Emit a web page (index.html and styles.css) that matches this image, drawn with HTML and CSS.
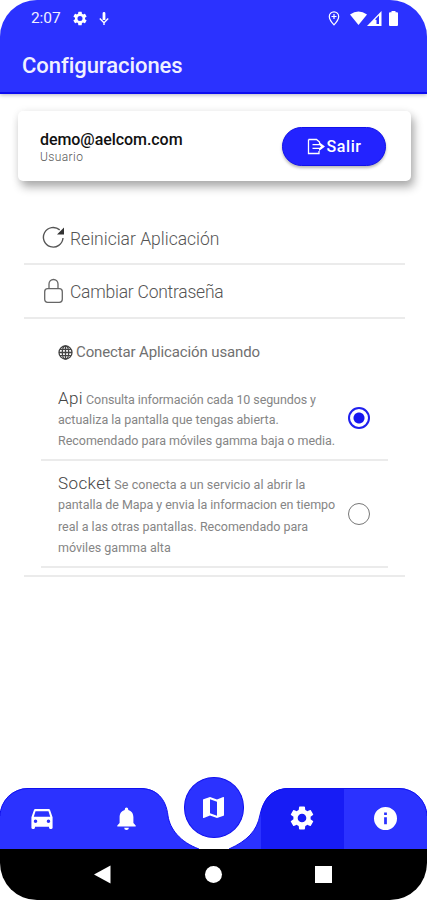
FILE: index.html
```html
<!DOCTYPE html>
<html lang="es">
<head>
<meta charset="utf-8">
<title>Configuraciones</title>
<link rel="stylesheet" href="styles.css">
</head>
<body>
<div class="phone">
  <header class="header">
    <div class="status">
      <span class="time">2:07</span>
      <svg class="s-gear" viewBox="2 2 20 20"><path d="M19.14 12.94c.04-.3.06-.61.06-.94s-.02-.64-.07-.94l2.03-1.58a.49.49 0 0 0 .12-.61l-1.92-3.32a.49.49 0 0 0-.59-.22l-2.39.96a7 7 0 0 0-1.62-.94l-.36-2.54a.48.48 0 0 0-.48-.41h-3.84a.48.48 0 0 0-.47.41l-.36 2.54c-.59.24-1.13.57-1.62.94l-2.39-.96a.48.48 0 0 0-.59.22L2.74 8.87a.48.48 0 0 0 .12.61l2.03 1.58a6 6 0 0 0-.02 1.88l-2.03 1.58a.49.49 0 0 0-.12.61l1.92 3.32c.12.22.37.29.59.22l2.39-.96c.5.38 1.03.7 1.62.94l.36 2.54c.05.24.24.41.48.41h3.84c.24 0 .44-.17.47-.41l.36-2.54a7 7 0 0 0 1.62-.94l2.39.96c.22.08.47 0 .59-.22l1.92-3.32a.48.48 0 0 0-.12-.61zM12 15.6a3.6 3.6 0 1 1 0-7.2 3.6 3.6 0 0 1 0 7.2z"/></svg>
      <svg class="s-mic" viewBox="0 0 10 13"><path d="M3.600 1.400a1.400 1.400 0 0 1 2.800 0V8H3.600z"/><path d="M.8 6.500L5 10.800l4.200-4.300M5 10v3" fill="none" stroke="#fff" stroke-width="1.400"/></svg>
      <span class="grow"></span>
      <svg class="s-pin" viewBox="0 0 12 15"><path d="M6 .8a4.700 4.700 0 0 0-4.700 4.700C1.300 9 6 13.800 6 13.800S10.700 9 10.700 5.500A4.700 4.700 0 0 0 6 .8z" fill="none" stroke="#fff" stroke-width="1.200"/><path d="M6 3v5M3.500 5.500h5" stroke="#fff" stroke-width="1.200"/></svg>
      <svg class="s-wifi" viewBox="0 0 18 15"><path d="M0 3.300Q9-3 18 3.300L9 14.500z"/></svg>
      <svg class="s-signal" viewBox="0 0 15 15"><path d="M14.500 0v15H0z"/><path class="cut" d="M8 8.500l4-4v8.500h-2.500v-4z"/></svg>
      <svg class="s-battery" viewBox="0 0 9 15"><path d="M2.500 0h4v1.200H8a1 1 0 0 1 1 1V14a1 1 0 0 1-1 1H1a1 1 0 0 1-1-1V2.200a1 1 0 0 1 1-1h1.500z"/></svg>
    </div>
    <h1 class="title">Configuraciones</h1>
  </header>

  <main class="content">
    <section class="card">
      <div class="user">
        <div class="email">demo@aelcom.com</div>
        <div class="role">Usuario</div>
      </div>
      <button class="logout">
        <svg viewBox="0 0 19 17"><path d="M1.500 1.500h8l3 2.500v1.500M1.500 1.500v14h10.500v-2.500M5.500 6.700h7M5.500 10.300h7"/><path class="solid" d="M12 4l6 4.500-6 4.500v-2.700l2-1.800-2-1.800z"/></svg>
        <span>Salir</span>
      </button>
    </section>

    <section class="options">
      <div class="row first">
        <svg class="reload" viewBox="0 0 23 23"><path d="M21 12A9.800 9.800 0 1 1 17.700 3.900" fill="none" stroke="#555" stroke-width="1.400"/><path d="M22 1.500v7h-7z" fill="#333"/></svg>
        <span class="t-reset">Reiniciar Aplicación</span>
      </div>
      <div class="row">
        <svg class="lock" viewBox="0 0 23 26"><rect x="2.700" y="10.700" width="17.600" height="13.600" rx="3"/><path d="M7 10.500V6a4.500 4.500 0 0 1 9 0v4.500"/></svg>
        <span class="t-pass">Cambiar Contraseña</span>
      </div>
      <div class="connection">
        <div class="conn-head">
          <svg viewBox="0 0 15 15"><circle cx="7.500" cy="7.500" r="6.500"/><ellipse cx="7.500" cy="7.500" rx="3.200" ry="6.500"/><path d="M7.500 1v13M1 7.500h13M2 4.300h11M2 10.700h11"/></svg>
          <span>Conectar Aplicación usando</span>
        </div>
        <label class="choice api">
          <span class="desc">
            <span class="line a1"><b>Api</b> Consulta información cada 10 segundos y</span>
            <span class="line a2">actualiza la pantalla que tengas abierta.</span>
            <span class="line a3">Recomendado para móviles gamma baja o media.</span>
          </span>
          <span class="radio on"></span>
        </label>
        <label class="choice socket">
          <span class="desc">
            <span class="line b1"><b>Socket</b> Se conecta a un servicio al abrir la</span>
            <span class="line b2">pantalla de Mapa y envia la informacion en tiempo</span>
            <span class="line b3">real a las otras pantallas. Recomendado para</span>
            <span class="line b4">móviles gamma alta</span>
          </span>
          <span class="radio"></span>
        </label>
      </div>
    </section>
  </main>

  <nav class="tabs">
    <svg class="tabs-bg" viewBox="0 0 427 73">
      <defs><clipPath id="right-tab"><path d="M229 73C247 65 257 55 260 39C264 21 273 12 290 12H399A28 28 0 0 1 427 40V73z"/></clipPath></defs>
      <path d="M0 73V40A28 28 0 0 1 28 12H140C156 12 166 22 168 40C170 53 180 66 199 73z"/>
      <g clip-path="url(#right-tab)"><rect x="220" width="207" height="73"/><rect class="active" x="261" width="83" height="73"/></g>
      <path class="edge" d="M0 40A28 28 0 0 1 28 12.500H140C156 12.500 166 22 168 40C170 53 180 66 199 73M229 73C247 65 257 55 260 39C264 21 273 12.500 290 12.500H399A28 28 0 0 1 427 40"/>
    </svg>
    <span class="tab"><svg class="car" viewBox="3 4 18 17"><path d="M18.920 5.010C18.720 4.420 18.160 4 17.500 4h-11c-.66 0-1.210.42-1.420 1.010L3 11v9c0 .55.45 1 1 1h1c.55 0 1-.45 1-1v-1h12v1c0 .55.45 1 1 1h1c.55 0 1-.45 1-1v-9zM6.500 16a1.500 1.500 0 1 1 0-3 1.500 1.500 0 0 1 0 3zm11 0a1.500 1.500 0 1 1 0-3 1.500 1.500 0 0 1 0 3zM5 10.500l1.500-4.500h11l1.500 4.500z"/></svg></span>
    <span class="tab"><svg class="bell" viewBox="4 2 16 20"><path d="M12 22c1.100 0 2-.9 2-2h-4a2 2 0 0 0 2 2zm6-6v-5c0-3.070-1.640-5.640-4.500-6.320V4a1.500 1.500 0 0 0-3 0v.68C7.630 5.360 6 7.920 6 11v5l-2 2v1h16v-1z"/></svg></span>
    <span class="map"><svg viewBox="3 3 18 18"><path d="M20.500 3l-.16.030L15 5.100 9 3 3.360 4.900A.5.5 0 0 0 3 5.380V20.500c0 .28.22.5.5.5l.16-.03L9 18.900l6 2.100 5.640-1.900a.5.5 0 0 0 .36-.48V3.500a.5.5 0 0 0-.5-.5zM15 19l-6-2.110V5l6 2.110z"/></svg></span>
    <span class="tab"><svg class="gear" viewBox="2 2 20 20"><path d="M19.140 12.940c.04-.3.06-.61.06-.94s-.02-.64-.07-.94l2.030-1.580a.49.49 0 0 0 .12-.61l-1.920-3.320a.49.49 0 0 0-.59-.22l-2.390.96a7 7 0 0 0-1.620-.94l-.36-2.540a.48.48 0 0 0-.48-.41h-3.840a.48.48 0 0 0-.47.41l-.36 2.540c-.59.24-1.130.57-1.620.94l-2.390-.96a.48.48 0 0 0-.59.22L2.740 8.870a.48.48 0 0 0 .12.61l2.030 1.580a6 6 0 0 0-.02 1.880l-2.030 1.580a.49.49 0 0 0-.12.61l1.920 3.320c.12.22.37.29.59.22l2.390-.96c.5.38 1.030.7 1.620.94l.36 2.540c.05.24.24.41.48.41h3.840c.24 0 .44-.17.47-.41l.36-2.540a7 7 0 0 0 1.620-.94l2.390.96c.22.08.47 0 .59-.22l1.920-3.320a.48.48 0 0 0-.12-.61zM12 15.600a3.600 3.600 0 1 1 0-7.200 3.600 3.600 0 0 1 0 7.200z"/></svg></span>
    <span class="tab"><svg class="info" viewBox="2 2 20 20"><path d="M12 2a10 10 0 1 0 0 20 10 10 0 0 0 0-20zm1.200 15h-2.400v-6h2.400zm0-8h-2.400V6.800h2.400z"/></svg></span>
  </nav>

  <footer class="system">
    <svg class="back" viewBox="0 0 17 19"><path d="M16.500.5v18L0 9.500z"/></svg>
    <span class="home"></span>
    <span class="recent"></span>
  </footer>
</div>
</body>
</html>
```
FILE: styles.css
```css
* { box-sizing: border-box; }
body {
  margin: 0;
  background: #fff;
  font-family: Roboto, "Liberation Sans", sans-serif;
  color: #555;
}
svg { display: block; flex: none; fill: #fff; }
.phone {
  width: 427px;
  height: 900px;
  display: flex;
  flex-direction: column;
  border-radius: 37px;
  overflow: hidden;
}
.header {
  height: 94px;
  flex: none;
  background: #2b32ff;
  border-bottom: 2px solid #0c0cf0;
  box-shadow: 0 1px 4px rgba(0, 0, 60, .3);
  color: #f0f0ff;
}
.status {
  height: 36px;
  display: flex;
  align-items: center;
  padding: 0 29px 0 31px;
}
.time { width: 42px; font-size: 15.5px; letter-spacing: -.1px; }
.s-gear { width: 14px; height: 15px; }
.s-mic { width: 10px; height: 13px; margin-left: 12px; }
.grow { flex: 1; }
.s-pin { width: 12px; height: 15px; }
.s-wifi { width: 17px; height: 15px; margin-left: 10px; }
.s-signal { width: 15px; height: 15px; }
.s-signal .cut { fill: #2b32ff; }
.s-battery { width: 9px; height: 15px; margin-left: 7px; }
.title {
  margin: 0;
  padding-left: 22px;
  font-size: 22px;
  font-weight: 500;
  line-height: 59px;
  letter-spacing: -.05px;
}
.content { flex: 1; padding: 17px 16px 0 18px; }
.card {
  height: 70px;
  display: flex;
  align-items: center;
  justify-content: space-between;
  padding: 0 25px 0 22px;
  background: #fff;
  border-radius: 5px;
  box-shadow: 3px 6px 10px rgba(0, 0, 0, .32), 0 0 8px rgba(0, 0, 0, .06);
}
.email { font-size: 16px; line-height: 19px; font-weight: 500; letter-spacing: -.06px; color: #111; white-space: nowrap; margin-top: 2px; }
.role { font-size: 12px; line-height: 16px; font-weight: 300; letter-spacing: .4px; }
.logout {
  width: 104px;
  height: 39px;
  display: flex;
  align-items: center;
  justify-content: center;
  border: 1px solid #1212ea;
  border-radius: 20px;
  background: #2323ff;
  box-shadow: 0 2px 3px rgba(0, 0, 0, .28);
  color: #fff;
  font: 500 16px Roboto, sans-serif;
  letter-spacing: .6px;
  padding: 0 0 0 1px;
}
.logout svg { width: 19px; height: 17px; fill: none; stroke: #fff; stroke-width: 1.3; }
.logout .solid { fill: #fff; stroke: none; }
.options { margin: 31px 6px 0 6px; border-bottom: 2px solid #ebebeb; height: 365px; }
.row {
  height: 54px;
  display: flex;
  align-items: center;
  gap: 5px;
  padding-left: 18px;
  border-bottom: 2px solid #ebebeb;
  font-size: 17.5px;
  font-weight: 300;
  white-space: nowrap;
}
.row span { padding-top: 1px; }
.row.first { height: 53px; }
.row.first span { padding-top: 2px; }
.t-pass { letter-spacing: -.24px; }
.reload { width: 23px; height: 23px; }
.lock { width: 23px; height: 26px; fill: none; stroke: #666; stroke-width: 1.3; }
.connection { padding: 0 17px; }
.conn-head {
  height: 66px;
  display: flex;
  align-items: center;
  gap: 3px;
  padding-left: 17px;
  font-size: 15px;
  letter-spacing: -.13px;
  white-space: nowrap;
  color: #707070;
}
.conn-head svg { width: 15px; height: 15px; fill: none; stroke: #444; stroke-width: 1.3; }
.choice {
  display: flex;
  align-items: center;
  justify-content: space-between;
  padding: 0 18px 0 17px;
  border-bottom: 2px solid #ebebeb;
}
.api { height: 76px; padding-bottom: 8px; }
.api .desc { padding-top: 3px; }
.socket { height: 107px; }
.socket .desc { padding-top: 4px; }
.desc { width: 280px; }
.line { display: block; height: 21.3px; line-height: 21.3px; font-size: 12.5px; white-space: nowrap; color: #858585; }
.line b { font-size: 17px; font-weight: 300; letter-spacing: .4px; color: #444; }
.a1 { letter-spacing: -.1px; }
.a3 { letter-spacing: -.02px; }
.b1 { letter-spacing: .05px; }
.b2 { letter-spacing: -.04px; }
.radio { width: 22px; height: 22px; flex: none; border: 1.5px solid #777; border-radius: 50%; }
.radio.on {
  border: 2px solid #2020ee;
  background: radial-gradient(circle, #1717f0 0 5px, transparent 6px);
}
.tabs {
  position: relative;
  height: 73px;
  display: flex;
  align-items: flex-end;
}
.tabs-bg { position: absolute; width: 427px; height: 73px; fill: #2b32ff; }
.tabs-bg .active { fill: #171cf5; }
.tabs-bg .edge { fill: none; stroke: #1010ef; stroke-width: 1; }
.tab {
  position: relative;
  width: 84px;
  height: 61px;
  display: flex;
  align-items: center;
  justify-content: center;
}
.car { width: 22px; height: 20px; }
.bell { width: 19px; height: 23px; margin: 0 0 1px 1px; }
.gear { width: 24px; height: 24px; margin: 0 0 1px 2px; }
.info { width: 23px; height: 23px; margin: 0 0 1px 1px; }
.map {
  position: relative;
  width: 61px;
  height: 61px;
  margin: 0 15px 11px 16px;
  display: flex;
  align-items: center;
  justify-content: center;
  border: 1px solid #1010ef;
  border-radius: 50%;
  background: #2b32ff;
}
.map svg { width: 21px; height: 21px; }
.system {
  height: 51px;
  flex: none;
  display: flex;
  align-items: center;
  justify-content: space-between;
  padding: 0 95px 0 94px;
  background: #000;
}
.back { width: 17px; height: 19px; }
.home { width: 17px; height: 17px; border-radius: 50%; background: #fff; }
.recent { width: 17px; height: 17px; background: #fff; }
```
